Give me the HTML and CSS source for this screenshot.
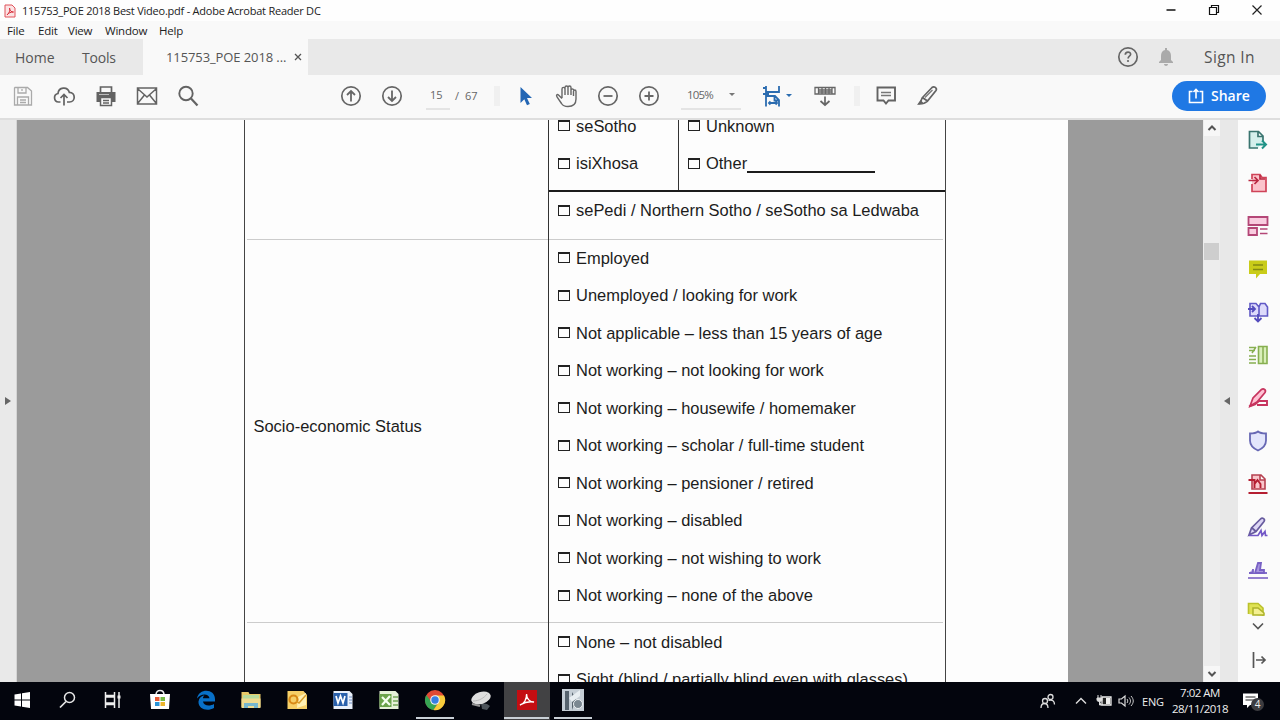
FILE: index.html
```
<!DOCTYPE html>
<html lang="en">
<head>
    <meta charset="UTF-8">
    <meta name="viewport" content="width=device-width, initial-scale=1.0">
    <title>115753_POE 2018 Best Video.pdf - Adobe Acrobat Reader DC</title>
    <link rel="stylesheet" href="styles.css">
</head>
<body>

<header class="titlebar">
    <svg class="app-icon" viewBox="0 0 12 14"><path d="M1 1h7l3 3v9H1z" fill="#fbe3e4" stroke="#e0525a"/><path d="M3 11c3-3 3-5 2.500-7 0 3 2 4 4 4-3 0-5 1-6.500 3z" fill="none" stroke="#d9303b"/></svg>
    <span class="window-title">115753_POE 2018 Best Video.pdf - Adobe Acrobat Reader DC</span>
    <div class="window-buttons">
        <svg viewBox="0 0 14 14"><path d="M2.500 6h9" stroke="#111" stroke-width="1.500"/></svg>
        <svg viewBox="0 0 14 14"><path d="M2.500 3.500h7v7h-7zM4.500 3V1.500h7v7H10" fill="none" stroke="#111" stroke-width="1.200"/></svg>
        <svg viewBox="0 0 14 14"><path d="M2.500 1.500l9 9M11.500 1.500l-9 9" stroke="#222" stroke-width="1.200"/></svg>
    </div>
</header>

<nav class="menubar">
    <span class="menu-file">File</span>
    <span class="menu-edit">Edit</span>
    <span class="menu-view">View</span>
    <span class="menu-window">Window</span>
    <span class="menu-help">Help</span>
</nav>

<div class="tabs">
    <span class="tab home">Home</span>
    <span class="tab tools">Tools</span>
    <div class="tab doc">
        <span class="doc-name">115753_POE 2018 ...</span>
        <svg class="close" viewBox="0 0 8 8"><path d="M1 1l6 6M7 1L1 7" stroke="#555" stroke-width="1.300"/></svg>
    </div>
    <div class="account">
        <svg class="help" viewBox="0 0 22 22"><circle cx="11" cy="11" r="9.200" fill="none" stroke="#666" stroke-width="1.700"/><path d="M8.300 8.700c0-3.600 5.600-3.400 5.300-.2-.2 1.700-2.500 1.800-2.500 4" fill="none" stroke="#666" stroke-width="1.700"/><circle cx="11" cy="15" r="1.100" fill="#666"/></svg>
        <svg class="bell" viewBox="0 0 16 20"><path d="M7 1h2v2c3 .7 4 3 4 6v4l2 2v1H1v-1l2-2V9c0-3 1-5.300 4-6zM6 17h4c0 2.500-4 2.500-4 0z" fill="#aaa"/></svg>
        <span class="sign-in">Sign In</span>
    </div>
</div>

<div class="toolbar">
    <div class="group file-group">
        <svg viewBox="0 0 24 24"><path d="M4 3.500h12.500L20.500 7v14H3.500V4zM7 4v5h8V4M6.500 21v-8h11v8M9 16h6M9 18.500h6M11 5v2" fill="none" stroke="#aaa" stroke-width="1.300"/></svg>
        <svg viewBox="0 0 24 24"><path d="M8.500 18H6.500a4.300 4.300 0 0 1-.5-8.500C6.500 3 15.500 2 17.300 8.300c6.500.2 6.500 9.500.2 9.700h-2.500M12 21.500V10.500M8.500 14l3.500-3.500 3.500 3.500" fill="none" stroke="#636363" stroke-width="1.700"/></svg>
        <svg viewBox="0 0 24 24"><path d="M6.500 8V3h11v5" fill="none" stroke="#636363" stroke-width="1.700"/><path d="M2.500 8h19v10h-3.500v-4H6v4H2.500z" fill="#636363"/><path d="M6.500 13.500h11v8h-11zM9 16.500h6M9 19h6" fill="#f9f9f9" stroke="#636363" stroke-width="1.500"/><path d="M5 10.500h10" stroke="#bbb"/></svg>
        <svg viewBox="0 0 24 24"><path d="M2.500 4h19v16h-19zM3 5l9 8 9-8M3 19l6.500-8M21 19l-6.500-8" fill="none" stroke="#636363" stroke-width="1.500"/></svg>
        <svg viewBox="0 0 24 24"><circle cx="10" cy="9.500" r="6.700" fill="none" stroke="#636363" stroke-width="1.900"/><path d="M15 14.500l6.500 7" stroke="#636363" stroke-width="2.200"/></svg>
    </div>
    <div class="group nav-group">
        <svg viewBox="0 0 24 24"><circle cx="12" cy="12" r="9.200" fill="none" stroke="#666" stroke-width="1.700"/><path d="M12 17.500V7M8 11l4-4 4 4" fill="none" stroke="#666" stroke-width="1.800"/></svg>
        <svg viewBox="0 0 24 24"><circle cx="12" cy="12" r="9.200" fill="none" stroke="#666" stroke-width="1.700"/><path d="M12 6.500V17M8 13l4 4 4-4" fill="none" stroke="#666" stroke-width="1.800"/></svg>
    </div>
    <div class="pager">
        <span class="page-now">15</span><span class="slash">/</span><span class="page-total">67</span>
    </div>
    <div class="separator"></div>
    <div class="group view-group">
        <svg viewBox="0 0 24 24"><path d="M6.500 3l11.500 11h-5l2.800 6-2.800 1.300-2.700-6L6.500 19z" fill="#2366b4"/></svg>
        <svg viewBox="0 0 24 24"><path d="M7 14.500L3.500 11c-1.500-1.500-2.500.5-1.500 1.800l4.500 6.700c1.500 2.500 3.500 3 6.500 3 5 0 8-2.500 8-7.500V7.500c0-2-2.500-2-2.500 0V12M7 14V5c0-2.200 3-2.200 3 0v6M10 10V3.500c0-2 3-2 3 0V11M13 10V3.500c0-2 3-2 3 0V11M16 6c0-1.500 2.500-1.500 2.500 0" fill="none" stroke="#666" stroke-width="1.400"/></svg>
        <svg viewBox="0 0 24 24"><circle cx="12" cy="12" r="9.200" fill="none" stroke="#666" stroke-width="1.700"/><path d="M7.500 12h9" stroke="#666" stroke-width="1.800"/></svg>
        <svg viewBox="0 0 24 24"><circle cx="12" cy="12" r="9.200" fill="none" stroke="#666" stroke-width="1.700"/><path d="M7.500 12h9M12 7.500v9" stroke="#666" stroke-width="1.800"/></svg>
    </div>
    <div class="zoom-box">
        <span class="zoom-value">105%</span>
        <span class="caret"></span>
    </div>
    <div class="group fit-group">
        <svg viewBox="0 0 24 24"><path d="M5 2v6h13V2M5 22.500V12h9l4 4v6.500M13.500 12v4.500H18M2 10h6M2 4h3M8 19h8M9.500 17.500L8 19l1.500 1.500M14.500 17.500L16 19l-1.500 1.500" fill="none" stroke="#2b6cb0" stroke-width="1.800"/></svg>
        <span class="caret blue"></span>
    </div>
    <svg class="scroll-mode" viewBox="0 0 24 24"><path d="M2 3.500h20v6.500H2zM5 6h14M5 8h14M5.500 4v6M9 4v6M12.500 4v6M16 4v6M19 4v6" fill="none" stroke="#666" stroke-width="1.300"/><path d="M12 12.500V21M7.500 17l4.500 4 4.500-4" fill="none" stroke="#666" stroke-width="1.700"/></svg>
    <div class="separator second"></div>
    <div class="group mark-group">
        <svg viewBox="0 0 24 24"><path d="M3.500 3.500h17.500v13h-6.500l-2.500 3-2.500-3h-6z" fill="none" stroke="#636363" stroke-width="1.900"/><path d="M7 8.500h10M7 11.500h10" stroke="#777" stroke-width="1.300"/></svg>
        <svg viewBox="0 0 24 24"><path d="M7.500 13.500L17 3.500c2-1.700 5.500.5 4 3L12.500 17zM7.500 13.500c-1 1-1 3-3 6.500 3 0 5.500-.5 8-3" fill="none" stroke="#636363" stroke-width="1.700"/><path d="M2 21l3.500-5 3 3z" fill="#636363"/><path d="M10 13.500l7.500-7.500" stroke="#777" stroke-width="1.300"/></svg>
    </div>
    <div class="share">
        <svg viewBox="0 0 18 18"><path d="M5.500 4.500H2.500v11h13v-11h-3M9 11.500V2.500M6.500 5L9 2.500 11.500 5" fill="none" stroke="#fff" stroke-width="1.600"/></svg>
        <span class="share-label">Share</span>
    </div>
</div>

<main class="viewer">
    <aside class="left-rail"><span class="tri-right"></span></aside>
    <div class="canvas">
        <div class="page">
            <div class="form-table">
                <div class="cell label-cell first"></div>
                <div class="cell first">
                    <div class="languages">
                        <div class="lang-col">
                            <div class="option"><i></i>seSotho</div>
                            <div class="option"><i></i>isiXhosa</div>
                        </div>
                        <div class="lang-col">
                            <div class="option"><i></i>Unknown</div>
                            <div class="option"><i></i>Other<span class="blank"></span></div>
                        </div>
                    </div>
                    <div class="option"><i></i>sePedi / Northern Sotho / seSotho sa Ledwaba</div>
                </div>
                <div class="cell label-cell status">Socio-economic Status</div>
                <div class="cell status-options">
                    <div class="option"><i></i>Employed</div>
                    <div class="option"><i></i>Unemployed / looking for work</div>
                    <div class="option"><i></i>Not applicable – less than 15 years of age</div>
                    <div class="option"><i></i>Not working – not looking for work</div>
                    <div class="option"><i></i>Not working – housewife / homemaker</div>
                    <div class="option"><i></i>Not working – scholar / full-time student</div>
                    <div class="option"><i></i>Not working – pensioner / retired</div>
                    <div class="option"><i></i>Not working – disabled</div>
                    <div class="option"><i></i>Not working – not wishing to work</div>
                    <div class="option"><i></i>Not working – none of the above</div>
                </div>
                <div class="cell label-cell"></div>
                <div class="cell disability">
                    <div class="option"><i></i>None – not disabled</div>
                    <div class="option"><i></i>Sight (blind / partially blind even with glasses)</div>
                </div>
            </div>
        </div>
    </div>
    <div class="scrollbar">
        <svg class="scroll-btn" viewBox="0 0 16 16"><path d="M4.500 10L8 6.500l3.500 3.500" fill="none" stroke="#555" stroke-width="2"/></svg>
        <div class="thumb"></div>
        <svg class="scroll-btn" viewBox="0 0 16 16"><path d="M4.500 6L8 9.500 11.500 6" fill="none" stroke="#555" stroke-width="2"/></svg>
    </div>
    <aside class="right-rail"><span class="tri-left"></span></aside>
    <aside class="tool-panel">
        <!-- export -->
        <svg viewBox="0 0 22 22"><path d="M11 19H2.500V2.500h9L16 7v5M11 3v4.500h5" fill="#d5efec" stroke="#39746f" stroke-width="1.700"/><path d="M9 15.500h9.500M15 11.500l4 4-4 4" fill="none" stroke="#219387" stroke-width="2"/></svg>
        <!-- create -->
        <svg viewBox="0 0 22 22"><path d="M5 7V2.500h8l2 3h4v14H5V12" fill="#fbc3cb" stroke="#cf4358" stroke-width="1.700"/><path d="M1.500 8.500h9M7.500 5l3.500 3.500L7.500 12M13 3v4h5" fill="none" stroke="#ba2942" stroke-width="1.700"/></svg>
        <!-- edit -->
        <svg viewBox="0 0 22 22"><path d="M1.500 2h19v8h-19zM1.500 13h8.500v7H1.500z" fill="#f9ccdf" stroke="#b44777" stroke-width="1.800"/><path d="M13 14h7.500M13 18.500h7.500" stroke="#b44777" stroke-width="1.500"/></svg>
        <!-- comment -->
        <svg viewBox="0 0 22 22"><path d="M2 2.500h18V16h-7l-4 4.500V16H2z" fill="#c9cc19"/><path d="M6 7h10M6 11.500h10" stroke="#858b12" stroke-width="1.500"/></svg>
        <!-- combine -->
        <svg viewBox="0 0 22 22"><path d="M3 15V2.500h6L12 6v9zM12 6l1.500-3.500H18L20.500 6v9H12" fill="#dddafb" stroke="#6059c5" stroke-width="1.600"/><path d="M1 8h7M5 5l3 3-3 3M11 13v7.500M7.500 17l3.500 3.500 3.500-3.500" fill="none" stroke="#544cbd" stroke-width="1.800"/></svg>
        <!-- organize -->
        <svg viewBox="0 0 22 22"><path d="M11.500 2.500H20v17h-8.500z" fill="#d9efb9" stroke="#87af50" stroke-width="1.600"/><path d="M2 3.500h7M2 6.500h6M2 12h7M2 15.500h7M2 19h7M9 3l-4 6M16 3v16" stroke="#87af50" stroke-width="1.500"/></svg>
        <!-- redact -->
        <svg viewBox="0 0 22 22"><path d="M3 19l3-8 8.500-8.500c2-1.500 5 .5 3.500 3L10 15z" fill="#ffc2d4" stroke="#c7345e" stroke-width="1.700"/><path d="M2 19.500l6-2 4-3.500h8v4H10" fill="none" stroke="#c7345e" stroke-width="1.900"/></svg>
        <!-- protect -->
        <svg viewBox="0 0 22 22"><path d="M11 1.500c2.500 2 5 2 8 2v7c0 5-3.500 8-8 10-4.500-2-8-5-8-10v-7c3 0 5.500 0 8-2z" fill="#e3e6fc" stroke="#6768b4" stroke-width="1.800"/></svg>
        <!-- optimize -->
        <svg viewBox="0 0 22 22"><path d="M5 2h9l4 4v10H5zM13 2v5h5" fill="#f9c6cb" stroke="#b64150" stroke-width="1.600"/><path d="M1.500 7h6v8M7.500 11l3-4 3 4v4M1.500 20h19" fill="none" stroke="#b51e31" stroke-width="1.900"/></svg>
        <!-- fill and sign -->
        <svg viewBox="0 0 22 22"><path d="M2 19l2.500-7 9-9c2-2 5 .3 3.500 2.500l-8 10zM5 12l4 3.500" fill="#ddd6f5" stroke="#675b9e" stroke-width="1.700"/><path d="M2 19.500h9l3-5 1 5 3-4 .5 4h2" fill="none" stroke="#7358c7" stroke-width="1.700"/></svg>
        <!-- send for signature -->
        <svg viewBox="0 0 22 22"><path d="M1 19h20" stroke="#8a72ca" stroke-width="1.800"/><path d="M2 14h4v-4M8 14l3-10h3l-1 7h4v3H8z" fill="#a896df" stroke="#7861c5" stroke-width="1.800"/><path d="M16 14h4" stroke="#7861c5" stroke-width="1.800"/></svg>
        <!-- more tools, cut by the panel -->
        <svg class="clipped" viewBox="0 0 22 14"><path d="M1.500 12V1.500H11L16 6v8" fill="#dfe253" stroke="#bbc12c" stroke-width="1.600"/><path d="M6 13V6h5l6 5v2z" fill="#f4f091" stroke="#adb32b" stroke-width="1.500"/></svg>
        <svg class="more" viewBox="0 0 12 8"><path d="M1 1.500l5 5 5-5" fill="none" stroke="#555" stroke-width="1.600"/></svg>
        <svg class="collapse" viewBox="0 0 22 22"><path d="M6.500 3v16M9 11h9M14.500 7.500L18 11l-3.500 3.500" fill="none" stroke="#555" stroke-width="1.700"/></svg>
    </aside>
</main>

<footer class="taskbar">
    <div class="task"><svg viewBox="0 0 22 22"><path d="M3.500 5.500l6.500-1v6H3.500zM11 4.300L19 3v7.500h-8zM3.500 11.500H10v6l-6.500-1zM11 11.500h8V19l-8-1.300z" fill="#fff"/></svg></div>
    <div class="task"><svg viewBox="0 0 22 22"><circle cx="12.500" cy="8.500" r="5" fill="none" stroke="#e6e6e6" stroke-width="1.500"/><path d="M9 12.500L3 18.500" stroke="#e6e6e6" stroke-width="1.700"/></svg></div>
    <div class="task"><svg viewBox="0 0 22 22"><path d="M2.500 3v3.500h9V3M2.500 19v-3.500h9V19M2.500 8h9v6h-9zM16 3v16" fill="none" stroke="#eee" stroke-width="1.500"/><path d="M14.500 6.500h3v3h-3z" fill="#eee"/></svg></div>
    <div class="task"><svg viewBox="0 0 22 22"><path d="M7 6c0-6 8-6 8 0" fill="none" stroke="#eee" stroke-width="1.600"/><path d="M1 5h20l-1 15H2z" fill="#fff"/><path d="M6 8h4.500v4H6z" fill="#e95b35"/><path d="M11.500 8H16v4h-4.500z" fill="#75b943"/><path d="M6 13h4.500v4H6z" fill="#2994d8"/><path d="M11.500 13H16v4h-4.500z" fill="#edb52d"/></svg></div>
    <div class="task"><svg viewBox="0 0 22 22"><path d="M2 9.500C3.500-1 20-1 20 10v2.500H8c.5 4.500 7 5 11 2.500v4C12 23 3 20 3.500 12.500 4 9 6.500 7 9.500 6.300 8.500 7.300 8 8 8 9.300h6.500C14 4.500 6 4 2 9.500z" fill="#0870c7"/></svg></div>
    <div class="task"><svg viewBox="0 0 22 22"><path d="M1.500 3h7l1 2h11v13h-19z" fill="#e9ca68"/><path d="M3 6h16v5H3z" fill="#b8db9c"/><path d="M1.500 9.500h19V19h-19z" fill="#f0dc91"/><path d="M4 19v-5h14v5h-4v-2H8v2z" fill="#77b7ce"/></svg></div>
    <div class="task"><svg viewBox="0 0 22 22"><path d="M1.500 2h16l3.500 4v14H1.500z" fill="#f6cf67"/><path d="M12 8l8-4v12l-9 3z" fill="#fff0b3"/><circle cx="7.500" cy="10.500" r="4" fill="none" stroke="#d88916" stroke-width="2.200"/><path d="M10 12l3 2 7-8" fill="none" stroke="#d99c27" stroke-width="1.500"/></svg></div>
    <div class="task"><svg viewBox="0 0 22 22"><path d="M1.500 2h16l3 3v15h-19z" fill="#e9f0fa"/><path d="M1.500 4h14v13h-14z" fill="#2a61ac"/><path d="M4 7l2 7 2.500-7 2.500 7 2-7" fill="none" stroke="#fff" stroke-width="1.700"/><path d="M17 8h3M17 11h3M17 14h3" stroke="#6e8fc4"/></svg></div>
    <div class="task"><svg viewBox="0 0 22 22"><path d="M1.500 2h16l3 3v15h-19z" fill="#e6f1d9"/><path d="M1.500 5h12v13h-12z" fill="#6ba34b"/><path d="M4 8l8 8M12 7l-8 9" stroke="#f5fff0" stroke-width="2.200"/><path d="M15 8h5M15 12h5M15 16h5" stroke="#76a75a" stroke-width="1.500"/></svg></div>
    <div class="task open"><svg viewBox="0 0 22 22"><circle cx="11" cy="11" r="10" fill="#e04a35"/><path d="M2.300 6A10 10 0 0 0 9.500 21l5-8-7 0z" fill="#36a553"/><path d="M11 6.500h9A10 10 0 0 1 9.500 21l5.500-8z" fill="#f8cc3b"/><circle cx="11" cy="11" r="4.800" fill="#f4f4f4"/><circle cx="11" cy="11" r="3.700" fill="#377fe4"/></svg></div>
    <div class="task"><svg viewBox="0 0 22 22"><path d="M11 14l6 1 3 2-3 4-5-1z" fill="#4c535a"/><ellipse cx="11" cy="9" rx="10" ry="6" transform="rotate(-18 11 9)" fill="#dedede"/><path d="M3 12c6 0 11-3 14-7" fill="none" stroke="#bbb"/><path d="M2 15l8 2" stroke="#969696" stroke-width="2"/></svg></div>
    <div class="task open active"><svg viewBox="0 0 22 22"><path d="M1 1h20v20H1z" fill="#c40d12"/><path d="M4 16c4-1 7-6 6.500-11 0 5 3.500 8 7.500 8-5-1-9 0-14 3z" fill="none" stroke="#fff" stroke-width="1.400"/></svg></div>
    <div class="task open"><svg viewBox="0 0 22 22"><path d="M0 0h22v22H0z" fill="#c5ced6"/><path d="M3 2h4v19H3zM10 3l4 7-4 11z" fill="#56636e"/><path d="M7 9L18 1v6l-8 6z" fill="#e8eef2"/><circle cx="16" cy="15" r="4.500" fill="#7a8791" stroke="#eef2f4"/></svg></div>

    <div class="tray">
        <svg class="people" viewBox="0 0 16 16"><circle cx="10.500" cy="4" r="2.500" fill="none" stroke="#ddd" stroke-width="1.300"/><circle cx="5" cy="8" r="2.500" fill="none" stroke="#ddd" stroke-width="1.300"/><path d="M1 15c0-6 7-6 7 0M8.500 7.500c4-1.500 6 1 6 4" fill="none" stroke="#ddd" stroke-width="1.300"/></svg>
        <svg class="up" viewBox="0 0 12 8"><path d="M1 6.500l5-5 5 5" fill="none" stroke="#ddd" stroke-width="1.400"/></svg>
        <svg class="battery" viewBox="0 0 16 14"><path d="M6 3h9v8H6z" fill="#222" stroke="#eee" stroke-width="1.300"/><path d="M10 4h4v6h-4z" fill="#eee"/><path d="M2 1v3M5 1v3M1 4h5v2c0 2-5 2-5 0zM3.500 7v4H6" fill="#ddd" stroke="#ddd"/></svg>
        <svg class="speaker" viewBox="0 0 16 14"><path d="M1 5h2.500L7 2v10L3.500 9H1z" fill="none" stroke="#ddd" stroke-width="1.200"/><path d="M9 5c1 1.500 1 2.500 0 4M11 3.500c2 2.500 2 4.500 0 7M13 2c3 3.500 3 6.500 0 10" fill="none" stroke="#ccc"/></svg>
        <span class="lang">ENG</span>
        <div class="clock"><span class="time">7:02 AM</span><span class="date">28/11/2018</span></div>
        <div class="notify">
            <svg viewBox="0 0 18 18"><path d="M1 1.500h15V13H8l-3 3v-3H1z" fill="#fff"/><path d="M3.500 5h10M3.500 8h9" stroke="#222" stroke-width="1.200"/></svg>
            <span class="badge">4</span>
        </div>
    </div>
</footer>

</body>
</html>
```
FILE: styles.css
```
* {
    padding: 0;
    margin: 0;
    box-sizing: border-box;
}
body {
    width: 1280px;
    height: 720px;
    display: flex;
    flex-direction: column;
    overflow: hidden;
    background-color: #f9f9f9;
    font-family: "Open Sans", "Noto Sans", sans-serif;
    color: #222;
    white-space: nowrap;
}
svg {
    display: block;
    flex: none;
}
.titlebar {
    height: 21px;
    display: flex;
    align-items: center;
    background-color: #fefefe;
    padding-left: 4px;
}
.app-icon {
    width: 12px;
    height: 14px;
}
.window-title {
    margin-left: 6px;
    font-size: 11px;
    letter-spacing: -0.23px;
}
.window-buttons {
    margin-left: auto;
    display: flex;
    gap: 29px;
    padding-right: 16px;
}
.window-buttons svg {
    width: 14px;
    height: 14px;
}
.menubar {
    height: 18px;
    display: flex;
    align-items: center;
    padding-left: 7px;
    font-size: 11.5px;
    letter-spacing: -0.2px;
}
.menubar span {
    flex: none;
}
.menu-file {
    width: 31px;
}
.menu-edit {
    width: 30px;
}
.menu-view {
    width: 37px;
}
.menu-window {
    width: 54px;
}
.tabs {
    height: 36px;
    display: flex;
    align-items: center;
    background-color: #e9e9e9;
    font-size: 14px;
    color: #555;
}
.home {
    width: 67px;
    margin-left: 15px;
}
.tools {
    width: 61px;
    letter-spacing: -0.2px;
}
.doc {
    width: 165px;
    height: 36px;
    display: flex;
    align-items: center;
    background-color: #f9f9f9;
    padding-left: 23px;
    font-size: 13px;
}
.doc-name {
    width: 128px;
    letter-spacing: -0.1px;
}
.close {
    width: 8px;
    height: 8px;
}
.account {
    margin-left: auto;
    display: flex;
    align-items: center;
    padding-right: 24px;
}
.help {
    width: 22px;
    height: 22px;
}
.bell {
    width: 16px;
    height: 20px;
    margin: 0 30px 0 19px;
}
.sign-in {
    width: 52px;
    font-size: 15.5px;
    letter-spacing: 0.4px;
}
.toolbar {
    height: 45px;
    display: flex;
    align-items: center;
    padding-bottom: 2px;
    border-bottom: 2px solid #dedede;
    color: #666;
}
.group {
    display: flex;
    align-items: center;
    gap: 17px;
}
.group svg,
.scroll-mode {
    width: 24px;
    height: 24px;
}
.file-group {
    margin-left: 11px;
    gap: 17.25px;
}
.nav-group {
    margin-left: 139px;
}
.pager {
    width: 62px;
    height: 30px;
    margin-left: 22px;
    display: flex;
    align-items: center;
    font-size: 11px;
}
.page-now {
    width: 24px;
    line-height: 26px;
    padding-left: 4px;
    border-bottom: 2px solid #e4e4e4;
}
.slash {
    margin: 0 6px 0 5px;
}
.separator {
    width: 6px;
    height: 20px;
    background-color: #f0f0f0;
    margin: 0 14px 0 6px;
}
.zoom-box {
    width: 60px;
    height: 28px;
    margin-left: 20px;
    padding-left: 6px;
    display: flex;
    align-items: center;
    border-bottom: 2px solid #e4e4e4;
    font-size: 11.5px;
}
.zoom-value {
    width: 42px;
    letter-spacing: -0.8px;
}
.caret {
    width: 6px;
    height: 3px;
    background-color: #777;
    clip-path: polygon(0 0, 100% 0, 50% 100%);
}
.blue {
    background-color: #2b6cb0;
}
.fit-group {
    margin-left: 20px;
    gap: 1px;
}
.scroll-mode {
    margin-left: 21px;
}
.second {
    margin: 0 14px 0 17px;
}
.mark-group {
    gap: 17px;
}
.share {
    width: 94px;
    height: 30px;
    margin: 0 14px 0 auto;
    padding-left: 15px;
    display: flex;
    align-items: center;
    border-radius: 15px;
    background-color: #1f78e4;
    color: #fff;
}
.share svg {
    width: 18px;
    height: 18px;
}
.share-label {
    margin-left: 6px;
    font-size: 14px;
    font-weight: 600;
}
.viewer {
    height: 562px;
    display: flex;
    overflow: hidden;
}
.left-rail {
    width: 17px;
    display: flex;
    align-items: center;
    background-color: #e9e9e9;
    border-right: 1px solid #d5d5d5;
}
.tri-right,
.tri-left {
    width: 6px;
    height: 8px;
    background-color: #666;
    clip-path: polygon(0 0, 100% 50%, 0 100%);
    margin-left: 5px;
}
.tri-left {
    clip-path: polygon(100% 0, 0 50%, 100% 100%);
}
.canvas {
    width: 1186px;
    background-color: #9b9b9b;
    padding-left: 133px;
}
.page {
    width: 918px;
    height: 562px;
    padding-left: 94px;
    background-color: #fdfdfd;
    overflow: hidden;
}
.form-table {
    width: 702px;
    display: grid;
    grid-template-columns: 304px 396px;
    border-left: 1px solid #444;
    border-right: 1px solid #444;
    font-family: "Liberation Sans", Arial, sans-serif;
    font-size: 16.47px;
    color: #1c1c1c;
}
/* row rules stop a little short of the outer borders */
.cell {
    background: linear-gradient(#ccc, #ccc) left bottom / calc(100% - 2px) 1px no-repeat;
}
.label-cell {
    background-position: right bottom;
    border-right: 1px solid #333;
    padding-left: 8.5px;
}
.first {
    height: 120px;
}
.status {
    height: 383px;
    line-height: 373px;
}
.languages {
    height: 72px;
    display: grid;
    grid-template-columns: 130px 1fr;
    border-bottom: 2px solid #1c1c1c;
    overflow: hidden;
}
.lang-col {
    margin-top: -12.5px;
}
.lang-col:first-child {
    border-right: 1px solid #333;
}
.option {
    height: 37.5px;
    display: flex;
    align-items: center;
    padding-left: 9px;
}
.status-options .option {
    position: relative;
    top: -0.6px;
}
.disability {
    padding-top: 0.5px;
}
.option i {
    width: 12px;
    height: 11px;
    margin: -1px 6px 0 0;
    border: 1.5px solid #222;
    border-top-width: 2px;
}
.blank {
    width: 128px;
    height: 2px;
    margin-top: 17px;
    background-color: #1c1c1c;
}
.scrollbar {
    width: 17px;
    display: flex;
    flex-direction: column;
    align-items: center;
    background-color: #ededed;
}
.scroll-btn {
    width: 16px;
    height: 16px;
    background-color: #f7f7f7;
}
.thumb {
    width: 15px;
    height: 17px;
    margin: 107px 0 auto;
    background-color: #cecece;
}
.right-rail {
    width: 18px;
    display: flex;
    align-items: center;
    background-color: #e8e8e8;
}
.right-rail .tri-left {
    margin-left: 4px;
}
.tool-panel {
    width: 42px;
    display: flex;
    flex-direction: column;
    align-items: center;
    gap: 21px;
    padding: 9px 2px 0 0;
    background-color: #fbfbfb;
}
.tool-panel svg {
    width: 22px;
    height: 22px;
}
.tool-panel .clipped {
    height: 14px;
}
.tool-panel .more {
    width: 12px;
    height: 8px;
    margin-top: -15px;
}
.tool-panel .collapse {
    margin-top: -2px;
}
.taskbar {
    height: 38px;
    display: flex;
    background-color: #03050d;
    color: #eee;
}
.task {
    width: 45.9px;
    height: 38px;
    padding-top: 7px;
    display: flex;
    flex-direction: column;
    align-items: center;
}
.task:first-child {
    margin-left: -1px;
}
.task svg {
    width: 22px;
    height: 22px;
}
.open::after {
    content: "";
    width: 38px;
    height: 2px;
    margin-top: 6px;
    background-color: #c9d0d6;
}
.active {
    background-color: #424244;
}
.active::after {
    width: 45px;
}
.tray {
    margin-left: auto;
    display: flex;
    align-items: center;
}
.people {
    width: 16px;
    height: 16px;
    margin-right: 19px;
}
.up {
    width: 12px;
    height: 8px;
    margin-right: 9px;
}
.battery {
    width: 16px;
    height: 14px;
    margin-right: 6px;
}
.speaker {
    width: 16px;
    height: 14px;
    margin-right: 8px;
}
.lang {
    width: 26px;
    font-size: 11px;
    letter-spacing: -0.2px;
}
.clock {
    width: 64px;
    display: flex;
    flex-direction: column;
    align-items: center;
    font-size: 11.5px;
    line-height: 16px;
    letter-spacing: -0.5px;
}
.notify {
    width: 38px;
    margin-left: 10px;
    position: relative;
}
.notify svg {
    width: 18px;
    height: 18px;
}
.badge {
    position: absolute;
    left: 9px;
    top: 6px;
    width: 13px;
    height: 13px;
    border-radius: 50%;
    background-color: #3c3c40;
    font-size: 10px;
    line-height: 13px;
    text-align: center;
}
```
